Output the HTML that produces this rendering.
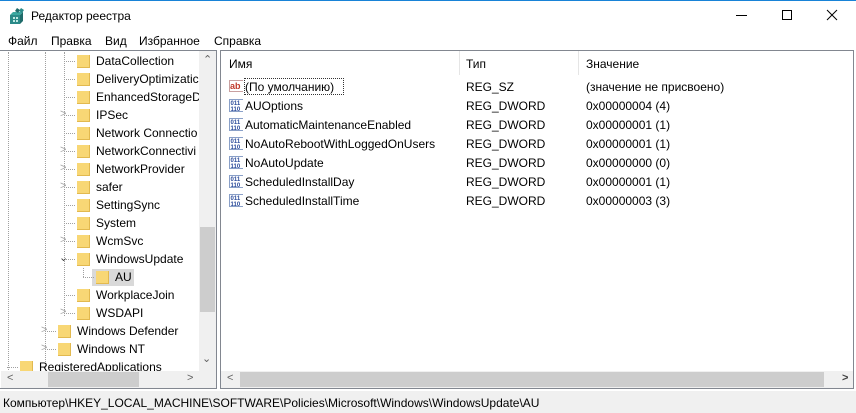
<!DOCTYPE html>
<html><head><meta charset="utf-8"><style>
*{margin:0;padding:0;box-sizing:border-box}
body{width:856px;height:413px;background:#fff;font-family:"Liberation Sans",sans-serif;font-size:12px;color:#000;position:relative;overflow:hidden}
.a{position:absolute;white-space:nowrap}
.f{position:absolute;width:13px;height:13px;background:#f8d775;border-right:1px solid #e2b94f;border-bottom:1px solid #e2b94f}
.t{position:absolute;white-space:nowrap;line-height:14px}
.dh{position:absolute;height:1px;border-top:1px dotted #a0a0a0}
.dv{position:absolute;width:1px;border-left:1px dotted #a0a0a0}
.ch{position:absolute;color:#a6a6a6;font-size:11px}
.ic{position:absolute;width:14px;height:14px}
</style></head><body>
<!-- title -->
<div style="position:absolute;left:0;top:0;width:856px;height:1px;background:#1883d7"></div>
<svg class="a" style="left:8px;top:7px" width="18" height="18" viewBox="0 0 18 18"><path d="M2 8h10v9H2z" fill="#2a8a88"/><path d="M2 8l3-3h10l-3 3z" fill="#3aa8a0"/><path d="M12 8l3-3v9l-3 3z" fill="#1f6b6a"/><path d="M5 10h2v2H5zM8 10h2v2H8zM5 13h2v2H5zM8 13h2v2H8z" fill="#bfe9e3"/><path d="M9 1l3 2-2 3-3-2z" fill="#1f6b6a"/><path d="M13 1l3 2-2 3-3-2z" fill="#2a8a88"/></svg>
<div class="a" style="left:31px;top:9px;font-size:12px">Редактор реестра</div>
<div class="a" style="left:736px;top:15px;width:11px;height:1px;background:#000"></div>
<div class="a" style="left:782px;top:10px;width:10px;height:10px;border:1px solid #000"></div>
<svg class="a" style="left:826px;top:9px" width="12" height="12"><path d="M1 1L11 11M11 1L1 11" stroke="#000" stroke-width="1"/></svg>
<!-- menu -->
<div class="a" style="left:8px;top:34px">Файл</div>
<div class="a" style="left:51px;top:34px">Правка</div>
<div class="a" style="left:105px;top:34px">Вид</div>
<div class="a" style="left:139px;top:34px">Избранное</div>
<div class="a" style="left:214px;top:34px">Справка</div>
<!-- left pane -->
<div class="a" style="left:0;top:50px;width:217px;height:339px;border:1px solid #828790;border-left:none"></div>
<div class="dv" style="left:8px;top:52px;height:318px"></div>
<div class="dv" style="left:45px;top:52px;height:318px"></div>
<div class="dv" style="left:64px;top:52px;height:264px"></div>
<div class="dv" style="left:83px;top:268px;height:9px"></div>
<!-- tree rows -->
<div id="tree"></div>
<!-- left vertical scrollbar -->
<div class="a" style="left:199px;top:51px;width:17px;height:320px;background:#f0f0f0"></div>
<div class="a" style="left:200px;top:227px;width:15px;height:85px;background:#cdcdcd"></div>
<div class="a" style="left:203px;top:53px;font-size:11px;color:#606060">&#8963;</div>
<div class="a" style="left:202px;top:352px;font-size:11px;color:#606060">&#8964;</div>
<!-- left horizontal scrollbar -->
<div class="a" style="left:1px;top:371px;width:215px;height:17px;background:#f0f0f0"></div>
<div class="a" style="left:48px;top:372px;width:91px;height:15px;background:#cdcdcd"></div>
<div class="a" style="left:7px;top:372px;color:#606060;font-size:11px">&lt;</div>
<div class="a" style="left:187px;top:372px;color:#606060;font-size:11px">&gt;</div>
<!-- right pane -->
<div class="a" style="left:220px;top:50px;width:634px;height:339px;border:1px solid #828790"></div>
<div class="a" style="left:459px;top:51px;width:1px;height:24px;background:#e5e5e5"></div>
<div class="a" style="left:578px;top:51px;width:1px;height:24px;background:#e5e5e5"></div>
<div class="a" style="left:229px;top:57px">Имя</div>
<div class="a" style="left:466px;top:57px">Тип</div>
<div class="a" style="left:586px;top:57px">Значение</div>
<div id="vals"></div>
<div class="a" style="left:244px;top:78px;width:100px;height:17px;border:1px dotted #333"></div>
<!-- right h scrollbar -->
<div class="a" style="left:221px;top:371px;width:632px;height:17px;background:#f0f0f0"></div>
<div class="a" style="left:240px;top:372px;width:584px;height:15px;background:#cdcdcd"></div>
<div class="a" style="left:227px;top:372px;color:#606060;font-size:11px">&lt;</div>
<div class="a" style="left:842px;top:372px;color:#404040;font-size:11px;font-weight:bold">&gt;</div>
<!-- status -->
<div class="a" style="left:0;top:391px;width:856px;height:22px;background:#f0f0f0"></div>
<div class="a" style="left:3px;top:396px">Компьютер\HKEY_LOCAL_MACHINE\SOFTWARE\Policies\Microsoft\Windows\WindowsUpdate\AU</div>
<script>
var rows=[["DataCollection",77,0],["DeliveryOptimizatic",77,0],["EnhancedStorageDe",77,0],["IPSec",77,1],["Network Connectio",77,0],["NetworkConnectivi",77,1],["NetworkProvider",77,1],["safer",77,1],["SettingSync",77,0],["System",77,0],["WcmSvc",77,1],["WindowsUpdate",77,2],["AU",96,0],["WorkplaceJoin",77,0],["WSDAPI",77,1],["Windows Defender",58,1],["Windows NT",58,1],["RegisteredApplications",20,0]];
var h="";
rows.forEach(function(r,i){var y=52+i*18,x=r[1];
if(r[0]=="AU")h+='<div class="a" style="left:92px;top:'+(y+1)+'px;width:42px;height:17px;background:#d9d9d9"></div>';
h+='<div class="dh" style="left:'+(x-13)+'px;top:'+(y+9)+'px;width:11px"></div>';
h+='<div class="f" style="left:'+x+'px;top:'+(y+3)+'px"></div>';
h+='<div class="t" style="left:'+(x+19)+'px;top:'+(y+2)+'px">'+r[0]+'</div>';
if(r[2]==1)h+='<div class="ch" style="left:'+(x-17)+'px;top:'+(y+2)+'px">&gt;</div>';
if(r[2]==2)h+='<div class="ch" style="left:'+(x-18)+'px;top:'+(y+1)+'px;color:#404040">&#8964;</div>';
});
document.getElementById("tree").innerHTML=h;
var v=[["(По умолчанию)","REG_SZ","(значение не присвоено)"],["AUOptions","REG_DWORD","0x00000004 (4)"],["AutomaticMaintenanceEnabled","REG_DWORD","0x00000001 (1)"],["NoAutoRebootWithLoggedOnUsers","REG_DWORD","0x00000001 (1)"],["NoAutoUpdate","REG_DWORD","0x00000000 (0)"],["ScheduledInstallDay","REG_DWORD","0x00000001 (1)"],["ScheduledInstallTime","REG_DWORD","0x00000003 (3)"]];
h="";
v.forEach(function(r,i){var y=79+i*19;
if(i==0)h+='<svg class="ic" style="left:229px;top:'+(y)+'px" width="15" height="15"><rect x="0.5" y="1.5" width="14" height="11" fill="#fff" stroke="#c9a0a0"/><text x="1" y="10" font-family="Liberation Sans" font-size="9" font-weight="bold" fill="#c0392b">ab</text></svg>';
else h+='<svg class="ic" style="left:229px;top:'+(y)+'px" width="15" height="15"><rect x="0.5" y="1.5" width="14" height="12" fill="#fff" stroke="#8aa0c8"/><text x="1.5" y="7" font-family="Liberation Sans" font-size="6" font-weight="bold" fill="#2a4a9a">011</text><text x="1.5" y="13" font-family="Liberation Sans" font-size="6" font-weight="bold" fill="#2a4a9a">110</text></svg>';
h+='<div class="t" style="left:245px;top:'+(y+1)+'px">'+r[0]+'</div>';
h+='<div class="t" style="left:466px;top:'+(y+1)+'px">'+r[1]+'</div>';
h+='<div class="t" style="left:586px;top:'+(y+1)+'px">'+r[2]+'</div>';
});
document.getElementById("vals").innerHTML=h;
</script>
</body></html>
